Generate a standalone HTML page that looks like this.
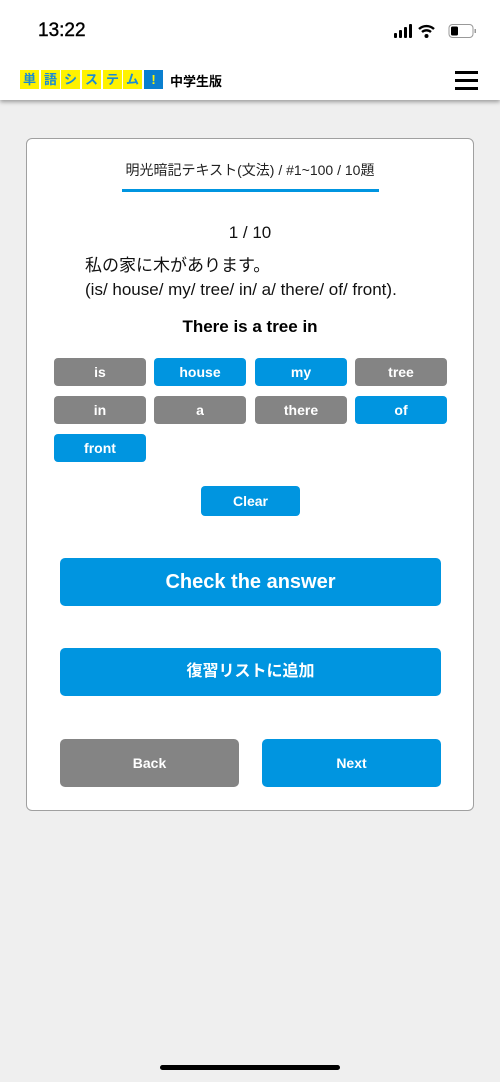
<!DOCTYPE html>
<html><head><meta charset="utf-8"><style>
*{margin:0;padding:0;box-sizing:border-box}
body{width:500px;height:1082px;background:#efefef;font-family:"Liberation Sans","Noto Sans CJK JP",sans-serif;position:relative;overflow:hidden}
.top{position:absolute;left:0;top:0;width:500px;height:100px;background:#fff;box-shadow:0 2px 4px rgba(0,0,0,.35)}
.abs{position:absolute}
.lg{position:absolute;top:70px;width:19px;height:19px;background:#fff200;color:#1a8ad4;font-weight:bold;font-size:13px;text-align:center;line-height:19px}
.card{position:absolute;left:26px;top:138px;width:448px;height:673px;background:#fff;border:1px solid #a0a0a0;border-radius:6px}
.b{position:absolute;height:28px;width:92px;border-radius:4px;color:#fff;font-weight:bold;font-size:14px;text-align:center;line-height:28px}
.g{background:#848484}.bl{background:#0095e0}
.big{position:absolute;left:60px;width:381px;height:48px;border-radius:5px;background:#0095e0;color:#fff;font-weight:bold;text-align:center;line-height:48px}
</style></head><body>
<div class="top">
<div class="abs" style="left:38px;top:20px;font-size:19px;color:#000;-webkit-text-stroke:0.4px #000">13:22</div>
<svg class="abs" style="left:394px;top:23px" width="86" height="16" viewBox="0 0 86 16">
<rect x="0" y="10" width="3" height="5" rx="1"/><rect x="5" y="7" width="3" height="8" rx="1"/><rect x="10" y="4" width="3" height="11" rx="1"/><rect x="15" y="1" width="3" height="14" rx="1"/>
<path d="M25 6a11 11 0 0 1 15 0M28 9a7 7 0 0 1 9 0" stroke="#000" stroke-width="2.4" fill="none"/><circle cx="32.5" cy="13" r="2"/>
<rect x="55" y="1.5" width="24" height="13" rx="3.5" fill="none" stroke="#999" stroke-width="1"/><rect x="57" y="3.5" width="7" height="9" rx="1.5"/><rect x="80.5" y="6" width="1.5" height="4" fill="#999"/>
</svg>
<div class="lg" style="left:20px">単</div><div class="lg" style="left:41px">語</div><div class="lg" style="left:61px">シ</div><div class="lg" style="left:82px">ス</div><div class="lg" style="left:103px">テ</div><div class="lg" style="left:123px">ム</div>
<div class="lg" style="left:144px;background:#0a7fcf;color:#fff200">!</div>
<div class="abs" style="left:170px;top:71px;font-size:13px;font-weight:bold;color:#000">中学生版</div>
<div class="abs" style="left:455px;top:71px;width:23px;height:2.5px;background:#000"></div>
<div class="abs" style="left:455px;top:79px;width:23px;height:2.5px;background:#000"></div>
<div class="abs" style="left:455px;top:87px;width:23px;height:2.5px;background:#000"></div>
</div>
<div class="card"></div>
<div class="abs" style="left:0;width:500px;top:160px;text-align:center;font-size:14px;color:#222">明光暗記テキスト(文法) / #1~100 / 10題</div>
<div class="abs" style="left:122px;top:189px;width:257px;height:3px;background:#0095e0"></div>
<div class="abs" style="left:0;width:500px;top:223px;text-align:center;font-size:17px;color:#111">1 / 10</div>
<div class="abs" style="left:85px;top:254px;font-size:17px;color:#111;line-height:24px">私の家に木があります。<br>(is/ house/ my/ tree/ in/ a/ there/ of/ front).</div>
<div class="abs" style="left:0;width:500px;top:317px;text-align:center;font-size:17px;font-weight:bold;color:#000">There is a tree in</div>
<div class="b g" style="left:54px;top:358px">is</div><div class="b bl" style="left:154px;top:358px">house</div><div class="b bl" style="left:255px;top:358px">my</div><div class="b g" style="left:355px;top:358px">tree</div>
<div class="b g" style="left:54px;top:396px">in</div><div class="b g" style="left:154px;top:396px">a</div><div class="b g" style="left:255px;top:396px">there</div><div class="b bl" style="left:355px;top:396px">of</div>
<div class="b bl" style="left:54px;top:434px">front</div>
<div class="b bl" style="left:201px;top:486px;width:99px;height:30px;line-height:30px">Clear</div>
<div class="big" style="top:558px;font-size:20px">Check the answer</div>
<div class="big" style="top:648px;font-size:16px">復習リストに追加</div>
<div class="big" style="top:739px;width:179px;background:#848484;font-size:14px">Back</div>
<div class="big" style="top:739px;left:262px;width:179px;font-size:14px">Next</div>
<div class="abs" style="left:160px;top:1065px;width:180px;height:5px;border-radius:3px;background:#000"></div>
</body></html>
